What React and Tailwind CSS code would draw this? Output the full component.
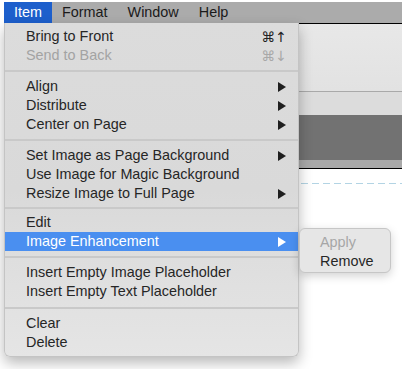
import React from "react";

const groups = [
  [
    { label: "Bring to Front", shortcut: "⌘↑" },
    { label: "Send to Back", shortcut: "⌘↓", disabled: true },
  ],
  [
    { label: "Align", sub: true },
    { label: "Distribute", sub: true },
    { label: "Center on Page", sub: true },
  ],
  [
    { label: "Set Image as Page Background", sub: true },
    { label: "Use Image for Magic Background" },
    { label: "Resize Image to Full Page", sub: true },
  ],
  [
    { label: "Edit" },
    { label: "Image Enhancement", sub: true, active: true },
  ],
  [
    { label: "Insert Empty Image Placeholder" },
    { label: "Insert Empty Text Placeholder" },
  ],
  [{ label: "Clear" }, { label: "Delete" }],
];

// separator heights before each group
const sepClass = ["", "h-[12px]", "h-[12px]", "h-[10px]", "h-[12px]", "h-[13px]"];

const Arrow = ({ white }) => (
  <svg width="8" height="10" viewBox="0 0 8 10" className="mr-[12px]">
    <polygon points="0,0 8,5 0,10" fill={white ? "#ffffff" : "#1f1f1f"} />
  </svg>
);

const MenuRow = ({ item }) => {
  const color = item.active
    ? "bg-[#4a8ff0] text-white"
    : item.disabled
    ? "text-[#a3a3a3]"
    : "text-[#262626]";
  return (
    <div className={`relative flex items-center justify-between h-[19px] pl-[21px] ${color}`}>
      <span>{item.label}</span>
      {item.shortcut && (
        <span
          className={`mr-[11px] text-[14px] ${item.disabled ? "text-[#a8a8a8]" : "text-[#222]"}`}
          style={{ fontFamily: '"DejaVu Sans", sans-serif' }}
        >
          {item.shortcut}
        </span>
      )}
      {item.sub && <Arrow white={item.active} />}
    </div>
  );
};

export default function App() {
  return (
    <div
      className="relative w-[402px] h-[369px] bg-white overflow-hidden pt-[2px] pl-[4px] text-[14.4px] leading-none"
      style={{ fontFamily: '"Liberation Sans", Arial, sans-serif' }}
    >
      {/* menu bar */}
      <div className="flex h-[21px] items-stretch bg-[#ababab] text-[#1a1a1a]">
        <div className="flex items-center px-[10px] bg-[#1d5fcc] text-white">Item</div>
        <div className="flex items-center px-[10px]">Format</div>
        <div className="flex items-center px-[10px]">Window</div>
        <div className="flex items-center px-[10px]">Help</div>
      </div>

      {/* window behind */}
      <div className="flex flex-col">
        <div className="h-[1px] bg-black" />
        <div className="h-[67px] bg-gradient-to-b from-[#e8e8e8] to-[#e2e2e2]" />
        <div className="h-[1px] bg-[#a9a9a9]" />
        <div className="h-[23px] bg-[#dcdcdc]" />
        <div className="h-[45px] bg-[#727272]" />
        <div className="h-[8px] bg-[#a9a9a9]" />
        <div className="h-[1px] bg-black" />
        <div className="mt-[14px] h-[1px] bg-[repeating-linear-gradient(90deg,#b3d4e4_0_7px,transparent_7px_11px)]" />
      </div>

      {/* dropdown menu */}
      <div className="absolute left-[4px] top-[23px] w-[295px] pt-[4px] pb-[4px] rounded-b-[6px] bg-gradient-to-b from-[#dcdcdc] via-[#d9d9d9] to-[#e5e5e5] border-x border-b border-[#c4c4c4] shadow-[0_6px_14px_rgba(0,0,0,0.28)]">
        {groups.map((group, gi) => (
          <div key={gi}>
            {gi > 0 && (
              <div className={`${sepClass[gi]} flex items-center`}>
                <div className="w-full h-[2px] bg-[#c9c9c9]" />
              </div>
            )}
            {group.map((item) => (
              <MenuRow key={item.label} item={item} />
            ))}
          </div>
        ))}
      </div>

      {/* submenu */}
      <div className="absolute left-[299px] top-[228px] w-[92px] h-[45px] pt-[4px] rounded-[6px] bg-[#e6e6e6] border border-[#c6c6c6] shadow-[0_3px_10px_rgba(0,0,0,0.18)]">
        <div className="h-[19px] flex items-center pl-[20px] text-[#a6a6a6]">Apply</div>
        <div className="h-[19px] flex items-center pl-[20px] text-[#262626]">Remove</div>
      </div>
    </div>
  );
}
